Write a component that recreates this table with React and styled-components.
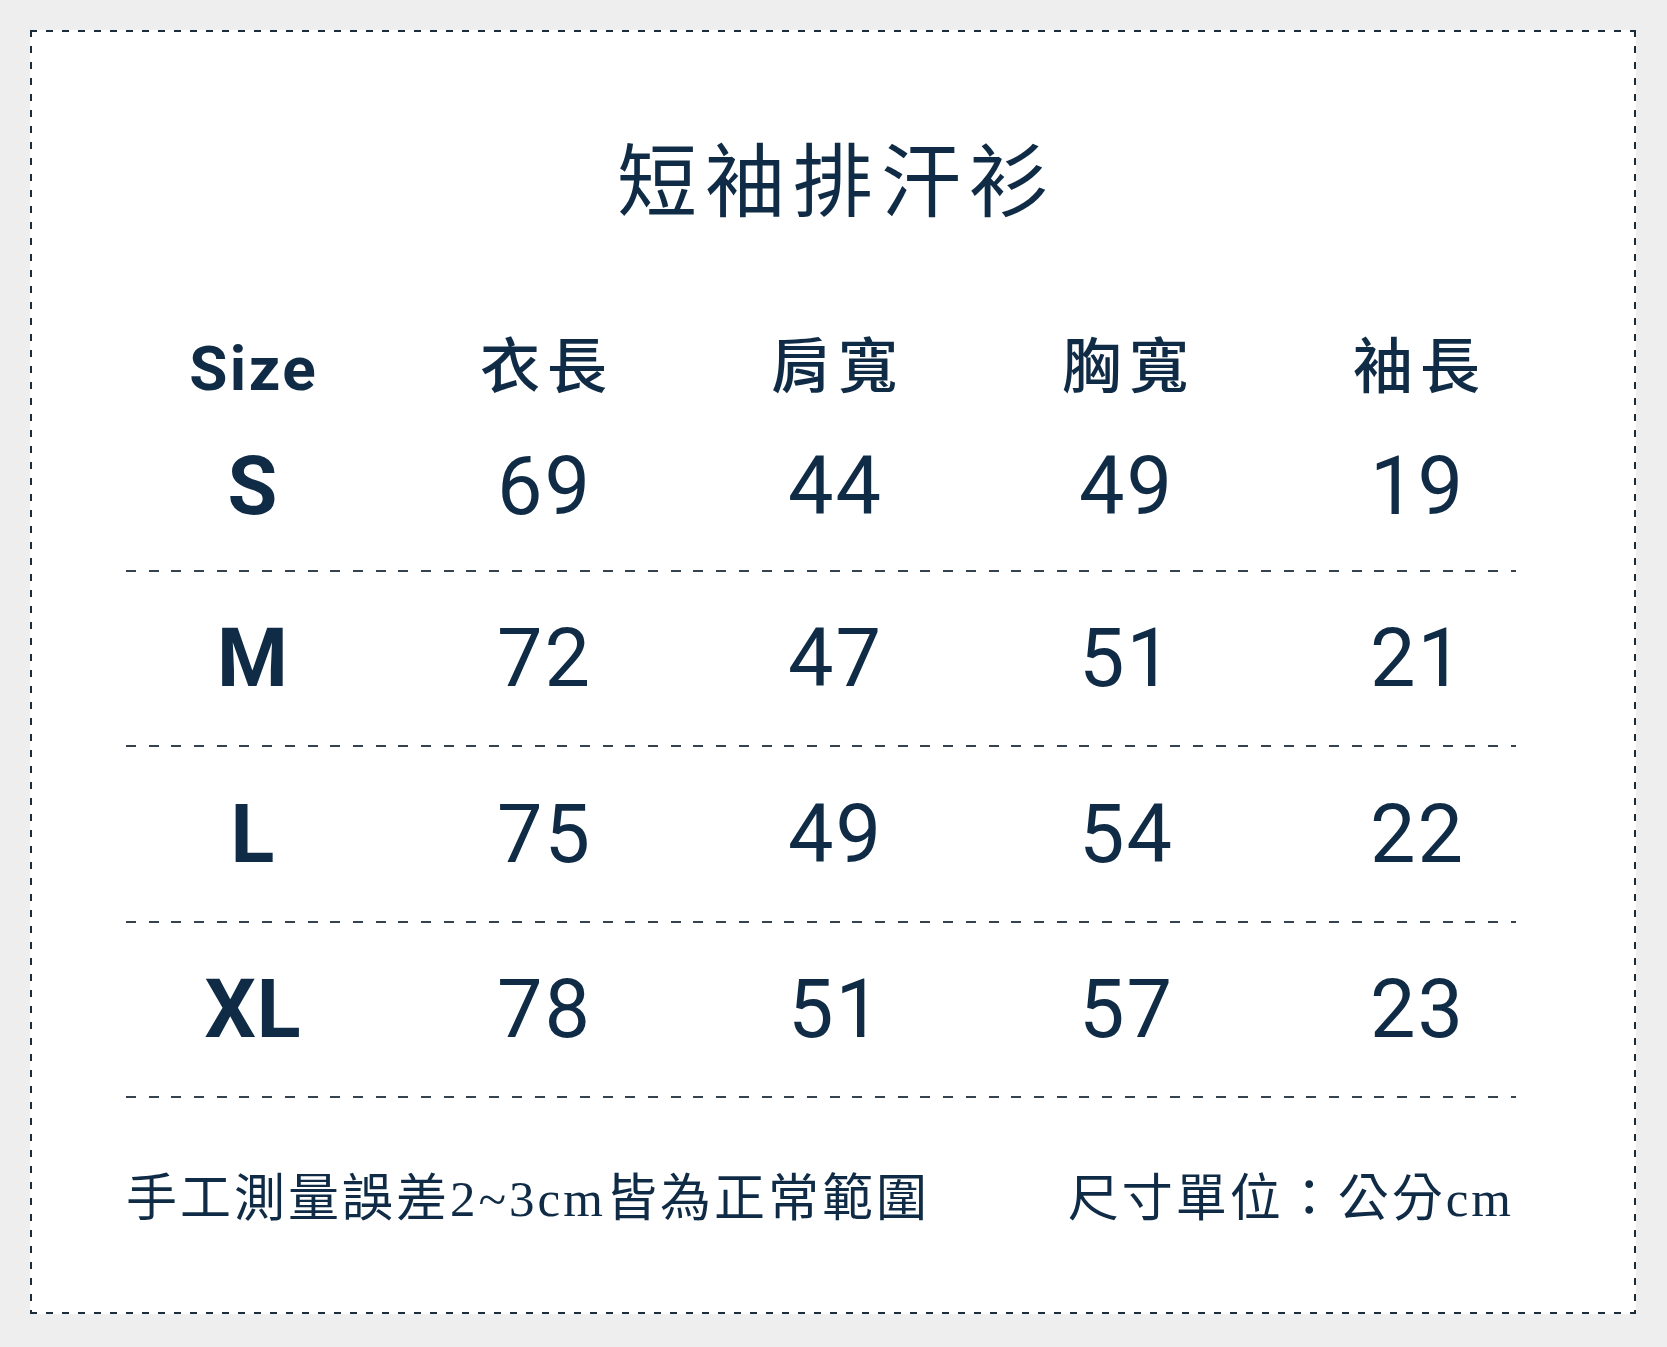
import React from "react";
import styled, { createGlobalStyle } from "styled-components";

const INK = "#0f2b45";

const GlobalStyle = createGlobalStyle`
  html, body {
    margin: 0;
    padding: 0;
    background: #eeeeee;
  }
  body {
    font-family: "Noto Sans CJK TC", "Noto Sans", sans-serif;
    color: ${INK};
  }
`;

const Page = styled.div`
  width: 1667px;
  height: 1347px;
  padding: 30px 31px 33px 30px;
  box-sizing: border-box;
  background: #eeeeee;
`;

const Card = styled.section`
  box-sizing: border-box;
  width: 1606px;
  height: 1284px;
  display: flex;
  flex-direction: column;
  background-color: #ffffff;
  background-image:
    repeating-linear-gradient(to right, #1d2c39 0 7px, transparent 7px 16px),
    repeating-linear-gradient(to right, #1d2c39 0 7px, transparent 7px 16px),
    repeating-linear-gradient(to bottom, #1d2c39 0 7px, transparent 7px 16px),
    repeating-linear-gradient(to bottom, #1d2c39 0 7px, transparent 7px 16px);
  background-size: 100% 2px, 100% 2px, 2px 100%, 2px 100%;
  background-position: left top, left bottom, left top, right top;
  background-repeat: no-repeat;
`;

const Title = styled.h1`
  margin: 105px 0 0;
  padding-left: 8px;
  text-align: center;
  font-family: "Noto Sans CJK TC", sans-serif;
  font-weight: 400;
  font-size: 80px;
  line-height: 80px;
  letter-spacing: 8px;
  color: ${INK};
`;

const Grid = styled.div`
  margin-left: 77px;
  width: 1455px;
  height: ${(p) => p.$h}px;
  margin-top: ${(p) => p.$mt || 0}px;
  display: grid;
  grid-template-columns: repeat(5, 1fr);
  align-items: center;
  justify-items: center;
`;

const HeadLabel = styled.div`
  font-family: "Noto Sans CJK TC", sans-serif;
  font-weight: 500;
  font-size: 60px;
  line-height: 1;
  letter-spacing: 7px;
  padding-left: 7px;
  color: ${INK};
`;

const SizeHead = styled.div`
  font-family: Roboto, "Noto Sans", sans-serif;
  font-weight: 700;
  font-size: 62px;
  line-height: 1;
  letter-spacing: 2.5px;
  padding-left: 2.5px;
  padding-top: 14px;
  color: ${INK};
`;

const SizeName = styled.div`
  font-family: Roboto, "Noto Sans", sans-serif;
  font-weight: 700;
  font-size: 81px;
  line-height: 1;
  letter-spacing: 1px;
  padding-left: 1px;
  color: ${INK};
`;

const Value = styled.div`
  font-family: Roboto, "Noto Sans", sans-serif;
  font-weight: 400;
  font-size: 81px;
  line-height: 1;
  letter-spacing: 2px;
  padding-left: 2px;
  color: ${INK};
`;

const Divider = styled.div`
  margin-left: 96px;
  width: 1390px;
  height: 2px;
  flex: none;
  background-image: repeating-linear-gradient(
    to right,
    #34434f 0 10px,
    transparent 10px 22.7px
  );
`;

const Footer = styled.div`
  margin: 76px 0 0 96px;
  width: 1388px;
  display: flex;
  justify-content: space-between;
`;

const Note = styled.p`
  margin: 0;
  font-family: "Liberation Serif", "Noto Sans CJK TC", serif;
  font-weight: 400;
  font-size: 51px;
  line-height: 51px;
  letter-spacing: 3px;
  color: ${INK};
  white-space: nowrap;
`;

const headers = ["衣長", "肩寬", "胸寬", "袖長"];
const rows = [
  { size: "S", values: [69, 44, 49, 19] },
  { size: "M", values: [72, 47, 51, 21] },
  { size: "L", values: [75, 49, 54, 22] },
  { size: "XL", values: [78, 51, 57, 23] },
];

export default function App() {
  return (
    <>
      <GlobalStyle />
      <Page>
        <Card>
          <Title>短袖排汗衫</Title>
          <Grid $h={80} $mt={107}>
            <SizeHead>Size</SizeHead>
            {headers.map((h) => (
              <HeadLabel key={h}>{h}</HeadLabel>
            ))}
          </Grid>
          {rows.map((r, i) => (
            <React.Fragment key={r.size}>
              <Grid $h={i === 0 ? 168 : 173.4}>
                <SizeName>{r.size}</SizeName>
                {r.values.map((v, j) => (
                  <Value key={j}>{v}</Value>
                ))}
              </Grid>
              <Divider />
            </React.Fragment>
          ))}
          <Footer>
            <Note>手工測量誤差2~3cm皆為正常範圍</Note>
            <Note>尺寸單位：公分cm</Note>
          </Footer>
        </Card>
      </Page>
    </>
  );
}
